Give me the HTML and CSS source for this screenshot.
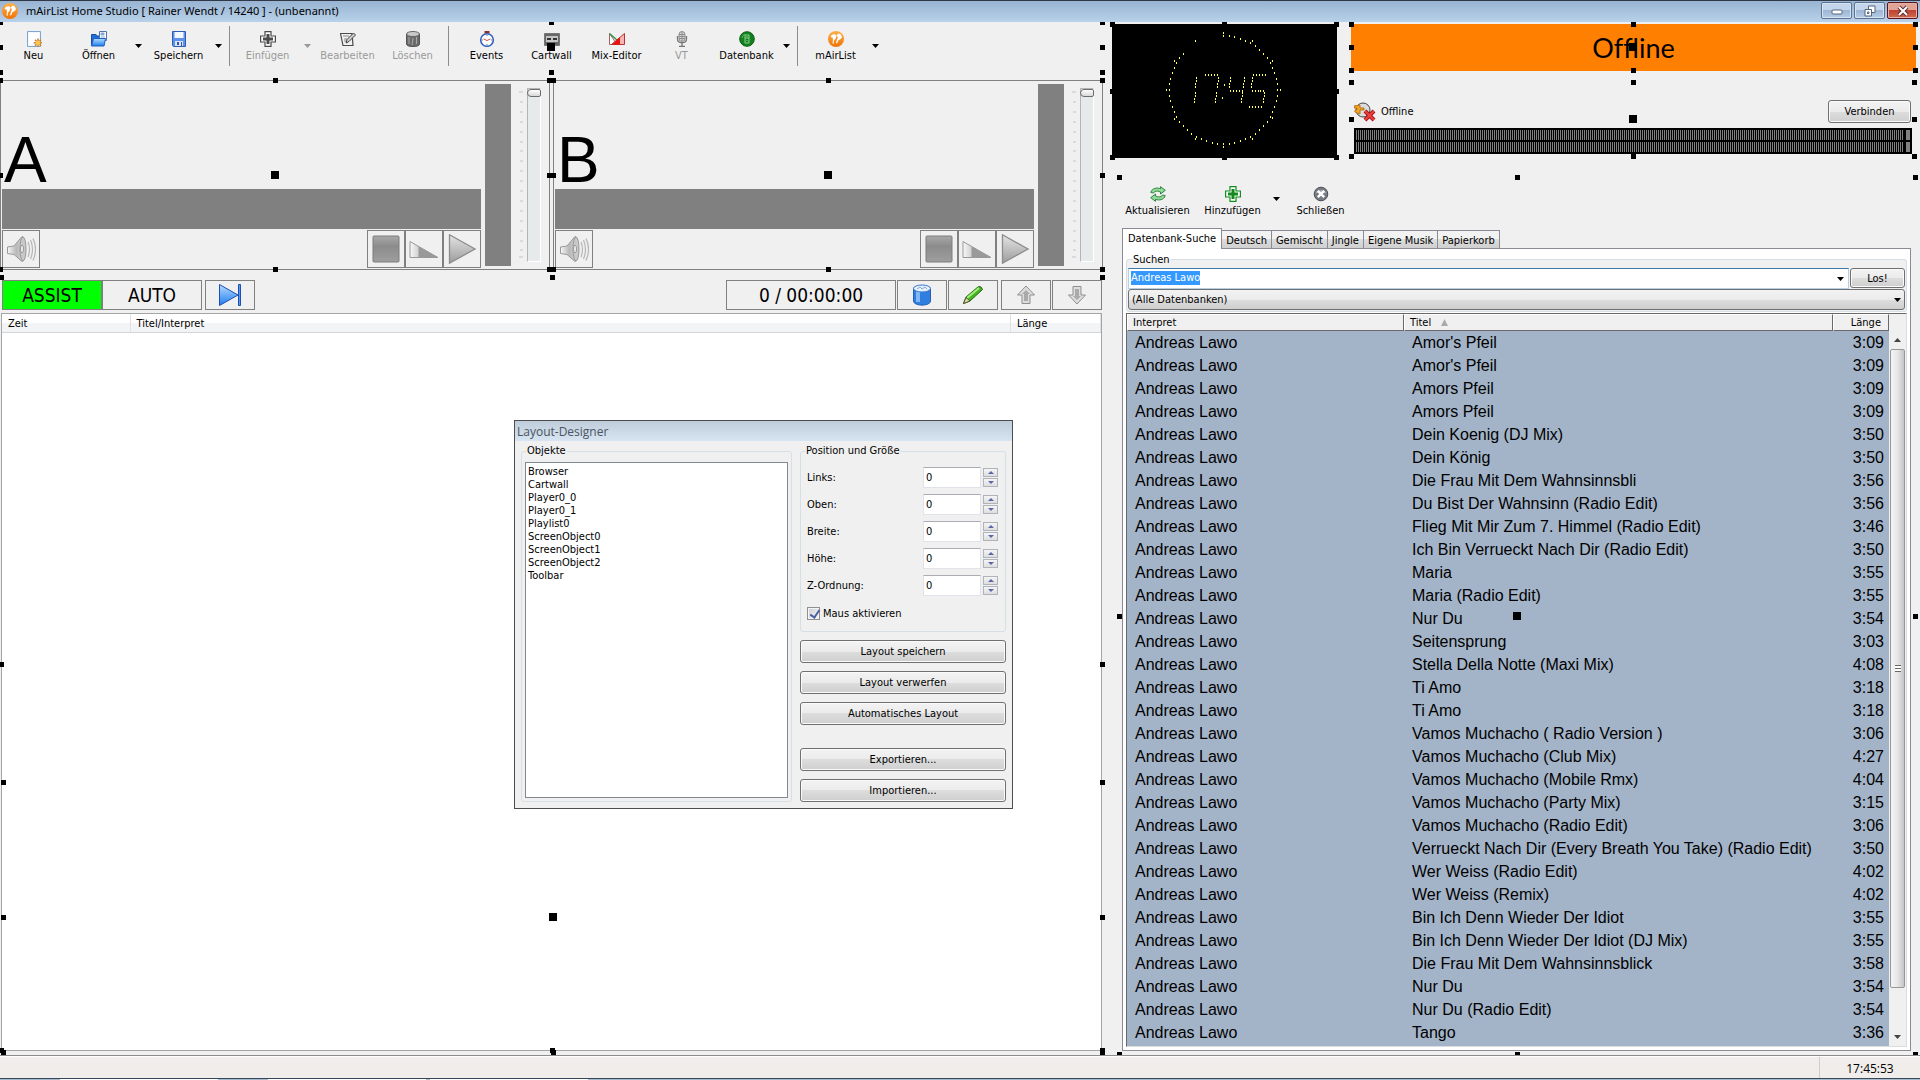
FILE: index.html
```
<!DOCTYPE html>
<html lang="de">
<head>
  <meta charset="UTF-8">
  <meta name="viewport" content="width=device-width, initial-scale=1.0">
  <title>mAirList Home Studio</title>
  <link rel="stylesheet" href="styles.css">
</head>
<body>
  <!-- shared icons -->
  <svg class="sprite" width="0" height="0" aria-hidden="true">
    <defs>
      <linearGradient id="g-orange" x1="0" y1="0" x2="0" y2="1"><stop offset="0" stop-color="#ffb04a"/><stop offset="1" stop-color="#ee7408"/></linearGradient>
      <linearGradient id="g-blue" x1="0" y1="0" x2="0" y2="1"><stop offset="0" stop-color="#b5dcff"/><stop offset="1" stop-color="#1f7df0"/></linearGradient>
      <linearGradient id="g-grey" x1="0" y1="0" x2="0" y2="1"><stop offset="0" stop-color="#e4e4e4"/><stop offset="1" stop-color="#9c9c9c"/></linearGradient>
      <linearGradient id="g-stop" x1="0" y1="0" x2="0" y2="1"><stop offset="0" stop-color="#a8a8a8"/><stop offset="0.4" stop-color="#8c8c8c"/><stop offset="1" stop-color="#9e9e9e"/></linearGradient>
      <linearGradient id="g-side" x1="0" y1="0" x2="1" y2="0"><stop offset="0" stop-color="#f8f8f8"/><stop offset="0.5" stop-color="#b8b8b8"/><stop offset="1" stop-color="#dcdcdc"/></linearGradient>
    </defs>
    <symbol id="i-logo" viewBox="0 0 16 16">
      <circle cx="8" cy="8" r="8" fill="url(#g-orange)"/>
      <path d="M2.500 6C3.500 3.500 5.500 3 7.500 3.500L8.500 5L7.500 8L6 9.500L5.500 13L4.500 12.500L5 8.500L4.500 6.500ZM8.500 4.500L10.500 2.500L13 3.500L14 6.500L12 8.500L10.500 9L9 12.500L8 12L9 8.500L10 6.500Z" fill="#fff"/>
    </symbol>
    <symbol id="i-new" viewBox="0 0 16 16">
      <path d="M1.500.500H14.500V15.500H1.500Z" fill="#eff7ff" stroke="#7fa6cc"/>
      <path d="M3 2H13V9L3 14Z" fill="#fff"/>
      <path d="M12 7.500V16M7.800 11.800H16M9 8.800L15 14.800M15 8.800L9 14.800" stroke="#c78134" stroke-width="1.600"/>
      <circle cx="12" cy="11.800" r="2.400" fill="#ffc64a"/>
    </symbol>
    <symbol id="i-open" viewBox="0 0 16 16">
      <path d="M.500 3.500H5L6 5H12V14.500H.500Z" fill="#1f6fd6" stroke="#174fa5"/>
      <path d="M8.500.500H15.500V9.500H8.500Z" fill="#fff" stroke="#5076ad"/>
      <path d="M10 2H13V4H10ZM10 6H14" fill="#83a9df" stroke="#83a9df"/>
      <path d="M2.500 7.500H14.500L13 15H.500Z" fill="url(#g-blue)" stroke="#1c5fc0"/>
    </symbol>
    <symbol id="i-save" viewBox="0 0 16 16">
      <path d="M1.500.500H14.500V15.500H2.500L1.500 14.500Z" fill="#5e92ea" stroke="#2d5eb4"/>
      <path d="M3.500 1H12.500V7H3.500Z" fill="#f4f8ff"/>
      <path d="M4 10H12V15H4Z" fill="#d9e4f6"/><path d="M6 11H8V14H6ZM10 11H11V15H10Z" fill="#3458a0"/>
    </symbol>
    <symbol id="i-plus" viewBox="0 0 16 16">
      <path d="M5 .600H11V5H15.400V11H11V15.400H5V11H.600V5H5Z" fill="#fff" stroke="currentColor" stroke-width="1.200"/>
      <path d="M6.500 3H9.500V6.500H13V9.500H9.500V13H6.500V9.500H3V6.500H6.500Z" fill="currentColor"/>
    </symbol>
    <symbol id="i-edit" viewBox="0 0 16 16">
      <path d="M.500 2.500H12L13 14.500H3Z" fill="#f1f1f1" stroke="#4b4b4b" stroke-width="1.200"/>
      <path d="M3 5H9M4 8H7M4 10H6" stroke="#888"/>
      <path d="M6 12L7 8.500L13.500 2L15.500 4L9 10.500Z" fill="#ccc" stroke="#444"/>
    </symbol>
    <symbol id="i-trash" viewBox="0 0 16 16">
      <path d="M1.500 3V13C1.500 16.500 14.500 16.500 14.500 13V3Z" fill="#6b6b6b" stroke="#555"/>
      <ellipse cx="8" cy="3" rx="6.500" ry="2.500" fill="#c9c9c9" stroke="#666"/>
      <path d="M4 6V13M8 7L7 14M11.500 6V13" stroke="#a9a9a9"/>
    </symbol>
    <symbol id="i-timer" viewBox="0 0 16 16">
      <path d="M5.500 0H10.500V2.500H5.500Z" fill="#8d2f2f"/>
      <circle cx="8" cy="9" r="6.300" fill="#fff" stroke="#3262bd" stroke-width="1.600"/>
      <path d="M4.500 8L8 9.500L11.500 8" fill="none" stroke="#c25555"/>
      <path d="M8 4V5M8 13V14M3 9H4M12 9H13" stroke="#777"/>
    </symbol>
    <symbol id="i-cart" viewBox="0 0 16 16">
      <path d="M.500 2.500H15.500V14.500H.500Z" fill="#666" stroke="#777"/>
      <path d="M2 5H14V11H2Z" fill="#c5c5c5"/>
      <path d="M3 7H7V9H3ZM9 7H13V9H9Z" fill="#333"/>
    </symbol>
    <symbol id="i-mix" viewBox="0 0 16 16">
      <path d="M.500 2.500V13.500H8Z" fill="#fff" stroke="#9b6363"/>
      <path d="M.500 2.500L8 9" stroke="#2f9448" stroke-width="1.400"/>
      <path d="M15.500 2.500V13.500H2.500Z" fill="#f7b5b5" stroke="#b33"/>
      <path d="M11 6V13.500H3Z" fill="#ea1111"/>
    </symbol>
    <symbol id="i-mic" viewBox="0 0 16 16">
      <path d="M3.500 5V8C3.500 13 12.500 13 12.500 8V5M8 12V15M5 15.300H11" fill="none" stroke="#777" stroke-width="1.300"/>
      <rect x="5" y=".500" width="6" height="10" rx="3" fill="#d9d9d9" stroke="#8c8c8c"/>
      <path d="M5 3.500H11M5 5.500H11M5 7.500H11M8 1V10" stroke="#8c8c8c"/>
    </symbol>
    <symbol id="i-db" viewBox="0 0 16 16">
      <circle cx="8" cy="8" r="7.300" fill="#11801d" stroke="#0a5d14"/>
      <path d="M6 4H10V12H6ZM6 7H10M7.500 5.500H8.500M7.500 9.500H8.500" fill="none" stroke="#8bd091"/>
      <path d="M3 7A5 5 0 0 1 6 3" fill="none" stroke="#5cb565"/>
    </symbol>
    <symbol id="i-refresh" viewBox="0 0 16 16">
      <path d="M.800 6.500C2 2 7 1.300 10.500 2.700V.700L15.300 4.300L10.500 8V6C7.500 4.500 4.500 4.800 3.500 7Z" fill="#8fdc97" stroke="#348245"/>
      <path d="M15.200 9.500C14 14 9 14.700 5.500 13.300V15.300L.700 11.700L5.500 8V10C8.500 11.500 11.500 11.200 12.500 9Z" fill="#8fdc97" stroke="#348245"/>
    </symbol>
    <symbol id="i-close" viewBox="0 0 16 16">
      <circle cx="8" cy="8" r="6.800" fill="#777b83" stroke="#4c4e52"/>
      <path d="M2.500 7A6 5 0 0 1 13.500 7Z" fill="#a9adb5"/>
      <path d="M4.800 4.800L11.200 11.200M11.200 4.800L4.800 11.200" stroke="#fff" stroke-width="2.400"/>
    </symbol>
    <symbol id="i-arrow" viewBox="0 0 7 4"><path d="M0 0H7L3.500 4Z" fill="currentColor"/></symbol>
    <symbol id="i-speaker" viewBox="0 0 30 30">
      <path d="M1.500 13L8 12L16 2.500C20 1 20 28 16 27.500L8 20.500L1.500 19.500Z" fill="url(#g-side)" stroke="#999"/>
      <ellipse cx="17" cy="15" rx="3" ry="12" fill="#c9c9c9" stroke="#999"/>
      <ellipse cx="16" cy="15" rx="1.500" ry="4" fill="#eee" stroke="#999"/>
      <path d="M22 8Q25 15 22 23M24.500 6Q28.500 15 24.500 25M27 4.500Q32 15 27 26.500" fill="none" stroke="#b5b5b5" stroke-width="1.200"/>
    </symbol>
    <symbol id="i-stop" viewBox="0 0 30 30"><rect x="2" y="2" width="26" height="26" rx="1" fill="url(#g-stop)" stroke="#7c7c7c"/></symbol>
    <symbol id="i-fade" viewBox="0 0 30 30">
      <path d="M1 7.500V23.500H29Z" fill="url(#g-side)" stroke="#999"/>
      <path d="M9.500 12.500L28 23H9.500Z" fill="#999"/>
    </symbol>
    <symbol id="i-play" viewBox="0 0 30 30"><path d="M2.500.800L28 15L2.500 29.200Z" fill="url(#g-grey)" stroke="#8c8c8c" stroke-width="1.300"/></symbol>
  </svg>

  <header class="titlebar">
    <svg class="icon"><use href="#i-logo"/></svg>
    <h1>mAirList Home Studio [ Rainer Wendt / 14240 ] - (unbenannt)</h1>
    <div class="window-buttons">
      <button aria-label="Minimieren"><svg width="12" height="12"><rect x="1" y="5" width="10" height="4" rx="1" fill="#fff" stroke="#53647c"/></svg></button>
      <button aria-label="Wiederherstellen"><svg width="12" height="12"><path d="M4.500 1H11V7.500H4.500Z" fill="#fff" stroke="#53647c"/><path d="M1 4.500H7.500V11H1Z" fill="#fff" stroke="#53647c"/><path d="M3.500 7H5V8.500H3.500Z" fill="none" stroke="#53647c"/></svg></button>
      <button class="close" aria-label="Schließen"><svg width="12" height="12"><path d="M2 2L10 10M10 2L2 10" stroke="#5a2e35" stroke-width="4"/><path d="M2 2L10 10M10 2L2 10" stroke="#fff" stroke-width="2"/></svg></button>
    </div>
  </header>

  <main class="workspace">
    <div class="left">
      <nav class="toolbar object">
        <button class="tool"><svg class="icon"><use href="#i-new"/></svg>Neu</button>
        <button class="tool"><svg class="icon"><use href="#i-open"/></svg>Öffnen</button>
        <button class="drop" aria-label="Öffnen Menü"><svg><use href="#i-arrow"/></svg></button>
        <button class="tool"><svg class="icon"><use href="#i-save"/></svg>Speichern</button>
        <button class="drop" aria-label="Speichern Menü"><svg><use href="#i-arrow"/></svg></button>
        <span class="sep"></span>
        <button class="tool" disabled><svg class="icon dark"><use href="#i-plus"/></svg>Einfügen</button>
        <button class="drop" disabled aria-label="Einfügen Menü"><svg><use href="#i-arrow"/></svg></button>
        <button class="tool" disabled><svg class="icon"><use href="#i-edit"/></svg>Bearbeiten</button>
        <button class="tool" disabled><svg class="icon"><use href="#i-trash"/></svg>Löschen</button>
        <span class="sep"></span>
        <button class="tool"><svg class="icon"><use href="#i-timer"/></svg>Events</button>
        <button class="tool"><svg class="icon"><use href="#i-cart"/></svg>Cartwall</button>
        <button class="tool"><svg class="icon"><use href="#i-mix"/></svg>Mix-Editor</button>
        <button class="tool" disabled><svg class="icon"><use href="#i-mic"/></svg>VT</button>
        <button class="tool"><svg class="icon"><use href="#i-db"/></svg>Datenbank</button>
        <button class="drop" aria-label="Datenbank Menü"><svg><use href="#i-arrow"/></svg></button>
        <span class="sep"></span>
        <button class="tool"><svg class="icon"><use href="#i-logo"/></svg>mAirList</button>
        <button class="drop" aria-label="mAirList Menü"><svg><use href="#i-arrow"/></svg></button>
      </nav>

      <div class="players">
        <section class="player object">
          <div class="deck">
            <div class="letter">A</div>
            <div class="progress"></div>
            <div class="controls">
              <button aria-label="Vorhören"><svg><use href="#i-speaker"/></svg></button>
              <span class="space"></span>
              <button aria-label="Stop"><svg><use href="#i-stop"/></svg></button>
              <button aria-label="Fade"><svg><use href="#i-fade"/></svg></button>
              <button aria-label="Start"><svg><use href="#i-play"/></svg></button>
            </div>
          </div>
          <div class="level"></div>
          <svg class="ticks" width="4" height="168"><path d="M0 1H4M1 11H4M1 21H4M1 31H4M1 41H4M1 51H4M1 60H4M1 70H4M1 80H4M1 90H4M1 100H4M1 110H4M1 120H4M1 130H4M1 140H4M1 150H4M1 159H4M0 166H4" stroke="#c4c4c4"/></svg>
          <input class="fader" type="range" min="0" max="100" value="100" aria-label="Lautstärke A">
        </section>
        <section class="player object">
          <div class="deck">
            <div class="letter">B</div>
            <div class="progress"></div>
            <div class="controls">
              <button aria-label="Vorhören"><svg><use href="#i-speaker"/></svg></button>
              <span class="space"></span>
              <button aria-label="Stop"><svg><use href="#i-stop"/></svg></button>
              <button aria-label="Fade"><svg><use href="#i-fade"/></svg></button>
              <button aria-label="Start"><svg><use href="#i-play"/></svg></button>
            </div>
          </div>
          <div class="level"></div>
          <svg class="ticks" width="4" height="168"><path d="M0 1H4M1 11H4M1 21H4M1 31H4M1 41H4M1 51H4M1 60H4M1 70H4M1 80H4M1 90H4M1 100H4M1 110H4M1 120H4M1 130H4M1 140H4M1 150H4M1 159H4M0 166H4" stroke="#c4c4c4"/></svg>
          <input class="fader" type="range" min="0" max="100" value="100" aria-label="Lautstärke B">
        </section>
      </div>

      <section class="playlist object">
        <div class="playlist-bar">
          <div class="modes">
            <button class="mode active">ASSIST</button>
            <button class="mode">AUTO</button>
          </div>
          <button class="square" aria-label="Nächster Titel"><svg width="24" height="24"><path d="M1.500 1.500L20 12L1.500 22.500Z" fill="url(#g-blue)" stroke="#1c4fae"/><path d="M20.500 1.500H22.500V22.500H20.500Z" fill="#4d9df4" stroke="#1c4fae"/></svg></button>
          <output class="counter">0 / 00:00:00</output>
          <div class="edit-group">
            <button class="square" aria-label="Leeren"><svg width="20" height="22"><path d="M1.500 4V17C1.500 22.500 18.500 22.500 18.500 17V4Z" fill="#2f7ee0" stroke="#2360b4"/><path d="M4 7V18H8V7Z" fill="#7fb8f5"/><ellipse cx="10" cy="4.500" rx="8.500" ry="3.500" fill="#e4f1ff" stroke="#3f79c6"/><path d="M5 5L8 3L10 5L13 3L15 5" fill="none" stroke="#8aa9cd"/></svg></button>
            <button class="square" aria-label="Bearbeiten"><svg width="22" height="20"><path d="M1.500 18.500L4 12L16.500 1.500Q19.500 1 20.500 4.500L8 16Z" fill="#43b51f" stroke="#246b12"/><path d="M5 13L17 3" stroke="#a8ec7f" stroke-width="2"/><path d="M1.500 18.500L4 12.500L8 16Z" fill="#ead9ae" stroke="#4c5a2a"/></svg></button>
          </div>
          <div class="edit-group">
            <button class="square" aria-label="Nach oben"><svg width="20" height="20"><path d="M10 1L18.500 10H14V18.500H6V10H1.500Z" fill="#ddd" stroke="#8f8f8f"/><path d="M10 5L14 9H12V16H8V9H6Z" fill="#aaa"/></svg></button>
            <button class="square" aria-label="Nach unten"><svg width="20" height="20"><path d="M10 19L18.500 10H14V1.500H6V10H1.500Z" fill="#ddd" stroke="#8f8f8f"/><path d="M10 15L14 11H12V4H8V11H6Z" fill="#aaa"/></svg></button>
          </div>
        </div>
        <div class="playlist-view">
          <table>
            <thead>
              <tr><th class="time">Zeit</th><th>Titel/Interpret</th><th class="length">Länge</th></tr>
            </thead>
          </table>
        </div>
        <div class="cartwall object"></div>
      </section>
    </div>

    <div class="right">
      <div class="top">
        <div class="clock object"><svg id="clock" width="225" height="134" role="img" aria-label="17:45"></svg></div>
        <div class="status-column">
          <div class="on-air object">Offline</div>
          <div class="encoder object">
            <div class="encoder-row">
              <svg width="22" height="20"><circle cx="9" cy="8" r="7" fill="#dcdcdc" stroke="#444"/><path d="M0 4L6 3V6H10V8H6V12L1 10V8H3V6H0Z" fill="#f5a623" stroke="#b5751c"/><path d="M11 9L20 18M20 9L11 18" stroke="#a31515" stroke-width="4"/><path d="M11 9L20 18M20 9L11 18" stroke="#f04040" stroke-width="2"/></svg>
              <span>Offline</span>
              <button class="btn connect">Verbinden</button>
            </div>
            <div class="meter">
              <div class="channel"><span class="bars"></span><span class="peak"></span></div>
              <div class="channel"><span class="bars"></span><span class="peak"></span></div>
            </div>
          </div>
        </div>
      </div>

      <section class="browser object">
        <nav class="browser-bar">
          <button class="tool"><svg class="icon"><use href="#i-refresh"/></svg>Aktualisieren</button>
          <button class="tool"><svg class="icon green"><use href="#i-plus"/></svg>Hinzufügen</button>
          <button class="drop" aria-label="Hinzufügen Menü"><svg><use href="#i-arrow"/></svg></button>
          <button class="tool"><svg class="icon"><use href="#i-close"/></svg>Schließen</button>
        </nav>
        <div class="tabs" role="tablist">
          <button class="tab active" role="tab" aria-selected="true">Datenbank-Suche</button>
          <button class="tab" role="tab">Deutsch</button>
          <button class="tab" role="tab">Gemischt</button>
          <button class="tab" role="tab">Jingle</button>
          <button class="tab" role="tab">Eigene Musik</button>
          <button class="tab" role="tab">Papierkorb</button>
        </div>
        <div class="tab-page">
          <fieldset class="search">
            <legend><label for="query">Suchen</label></legend>
            <div class="search-row">
              <div class="combo">
                <input id="query" type="text" value="Andreas Lawo">
                <button class="drop" aria-label="Verlauf"><svg><use href="#i-arrow"/></svg></button>
              </div>
              <button class="btn go">Los!</button>
            </div>
            <div class="source">
              <select aria-label="Datenbank"><option>(Alle Datenbanken)</option></select>
              <svg class="source-arrow"><use href="#i-arrow"/></svg>
            </div>
          </fieldset>
          <div class="results">
            <div class="results-view">
              <table>
                <thead>
                  <tr><th class="artist">Interpret</th><th>Titel <svg class="sort" width="7" height="7"><path d="M3.500 0L7 7H0Z" fill="#aaa"/></svg></th><th class="length">Länge</th></tr>
                </thead>
                <tbody>
                  <tr><td>Andreas Lawo</td><td>Amor's Pfeil</td><td>3:09</td></tr>
                  <tr><td>Andreas Lawo</td><td>Amor's Pfeil</td><td>3:09</td></tr>
                  <tr><td>Andreas Lawo</td><td>Amors Pfeil</td><td>3:09</td></tr>
                  <tr><td>Andreas Lawo</td><td>Amors Pfeil</td><td>3:09</td></tr>
                  <tr><td>Andreas Lawo</td><td>Dein Koenig (DJ Mix)</td><td>3:50</td></tr>
                  <tr><td>Andreas Lawo</td><td>Dein König</td><td>3:50</td></tr>
                  <tr><td>Andreas Lawo</td><td>Die Frau Mit Dem Wahnsinnsbli</td><td>3:56</td></tr>
                  <tr><td>Andreas Lawo</td><td>Du Bist Der Wahnsinn (Radio Edit)</td><td>3:56</td></tr>
                  <tr><td>Andreas Lawo</td><td>Flieg Mit Mir Zum 7. Himmel (Radio Edit)</td><td>3:46</td></tr>
                  <tr><td>Andreas Lawo</td><td>Ich Bin Verrueckt Nach Dir (Radio Edit)</td><td>3:50</td></tr>
                  <tr><td>Andreas Lawo</td><td>Maria</td><td>3:55</td></tr>
                  <tr><td>Andreas Lawo</td><td>Maria (Radio Edit)</td><td>3:55</td></tr>
                  <tr><td>Andreas Lawo</td><td>Nur Du</td><td>3:54</td></tr>
                  <tr><td>Andreas Lawo</td><td>Seitensprung</td><td>3:03</td></tr>
                  <tr><td>Andreas Lawo</td><td>Stella Della Notte (Maxi Mix)</td><td>4:08</td></tr>
                  <tr><td>Andreas Lawo</td><td>Ti Amo</td><td>3:18</td></tr>
                  <tr><td>Andreas Lawo</td><td>Ti Amo</td><td>3:18</td></tr>
                  <tr><td>Andreas Lawo</td><td>Vamos Muchacho ( Radio Version )</td><td>3:06</td></tr>
                  <tr><td>Andreas Lawo</td><td>Vamos Muchacho (Club Mix)</td><td>4:27</td></tr>
                  <tr><td>Andreas Lawo</td><td>Vamos Muchacho (Mobile Rmx)</td><td>4:04</td></tr>
                  <tr><td>Andreas Lawo</td><td>Vamos Muchacho (Party Mix)</td><td>3:15</td></tr>
                  <tr><td>Andreas Lawo</td><td>Vamos Muchacho (Radio Edit)</td><td>3:06</td></tr>
                  <tr><td>Andreas Lawo</td><td>Verrueckt Nach Dir (Every Breath You Take) (Radio Edit)</td><td>3:50</td></tr>
                  <tr><td>Andreas Lawo</td><td>Wer Weiss (Radio Edit)</td><td>4:02</td></tr>
                  <tr><td>Andreas Lawo</td><td>Wer Weiss (Remix)</td><td>4:02</td></tr>
                  <tr><td>Andreas Lawo</td><td>Bin Ich Denn Wieder Der Idiot</td><td>3:55</td></tr>
                  <tr><td>Andreas Lawo</td><td>Bin Ich Denn Wieder Der Idiot (DJ Mix)</td><td>3:55</td></tr>
                  <tr><td>Andreas Lawo</td><td>Die Frau Mit Dem Wahnsinnsblick</td><td>3:58</td></tr>
                  <tr><td>Andreas Lawo</td><td>Nur Du</td><td>3:54</td></tr>
                  <tr><td>Andreas Lawo</td><td>Nur Du (Radio Edit)</td><td>3:54</td></tr>
                  <tr><td>Andreas Lawo</td><td>Tango</td><td>3:36</td></tr>
                </tbody>
              </table>
            </div>
            <div class="scrollbar">
              <svg class="scroll-up" width="7" height="4"><path d="M0 4H7L3.500 0Z" fill="#444"/></svg>
              <div class="track"><div class="thumb"></div></div>
              <svg class="scroll-down" width="7" height="4"><path d="M0 0H7L3.500 4Z" fill="#444"/></svg>
            </div>
          </div>
        </div>
      </section>
    </div>

    <div class="designer" role="dialog" aria-label="Layout-Designer">
      <h2>Layout-Designer</h2>
      <div class="designer-body">
        <fieldset class="objects">
          <legend>Objekte</legend>
          <select size="9" aria-label="Objekte">
            <option>Browser</option>
            <option>Cartwall</option>
            <option>Player0_0</option>
            <option>Player0_1</option>
            <option>Playlist0</option>
            <option>ScreenObject0</option>
            <option>ScreenObject1</option>
            <option>ScreenObject2</option>
            <option>Toolbar</option>
          </select>
        </fieldset>
        <div class="designer-side">
          <fieldset class="position">
            <legend>Position und Größe</legend>
            <div class="field"><label for="pos-left">Links:</label><input id="pos-left" type="number" value="0"><span class="spin"><button aria-label="mehr"></button><button aria-label="weniger"></button></span></div>
            <div class="field"><label for="pos-top">Oben:</label><input id="pos-top" type="number" value="0"><span class="spin"><button aria-label="mehr"></button><button aria-label="weniger"></button></span></div>
            <div class="field"><label for="pos-width">Breite:</label><input id="pos-width" type="number" value="0"><span class="spin"><button aria-label="mehr"></button><button aria-label="weniger"></button></span></div>
            <div class="field"><label for="pos-height">Höhe:</label><input id="pos-height" type="number" value="0"><span class="spin"><button aria-label="mehr"></button><button aria-label="weniger"></button></span></div>
            <div class="field"><label for="pos-z">Z-Ordnung:</label><input id="pos-z" type="number" value="0"><span class="spin"><button aria-label="mehr"></button><button aria-label="weniger"></button></span></div>
            <label class="check"><input type="checkbox" checked>Maus aktivieren</label>
          </fieldset>
          <button class="btn">Layout speichern</button>
          <button class="btn">Layout verwerfen</button>
          <button class="btn">Automatisches Layout</button>
          <button class="btn export">Exportieren...</button>
          <button class="btn">Importieren...</button>
        </div>
      </div>
    </div>
  </main>

  <footer class="statusbar"><time>17:45:53</time></footer>
  <div class="taskbar"></div>

  <script src="script.js"></script>
</body>
</html>
```
FILE: styles.css
```
* {
  box-sizing: border-box;
}
body {
  margin: 0;
  height: 100vh;
  display: flex;
  flex-direction: column;
  overflow: hidden;
  background: #f0f0f0;
  color: #000;
  font-family: Tahoma, "DejaVu Sans Condensed", "Open Sans", sans-serif;
  font-size: 11px;
  line-height: 14px;
}
button, input, select {
  font: inherit;
  color: inherit;
  margin: 0;
}
button {
  padding: 0;
  border: none;
  background: none;
}
svg {
  display: block;
  flex: none;
}
fieldset {
  margin: 0;
  padding: 0;
  min-width: 0;
  border: 1px solid #d5dfe5;
  border-radius: 3px;
}
legend {
  margin-left: 1px;
  padding: 0 1px;
}
.sprite {
  position: absolute;
}
.icon {
  width: 16px;
  height: 16px;
}
.icon.dark {
  color: #4a4a4a;
}
.icon.green {
  color: #138a1d;
}

/* title bar */
.titlebar {
  flex: none;
  height: 22px;
  display: flex;
  align-items: center;
  gap: 8px;
  padding: 0 2px 2px;
  border-top: 1px solid #2f3846;
  background: linear-gradient(#98b4d2, #b9d1ea);
}
.titlebar h1 {
  flex: 1;
  margin: 0;
  font: 11px "Segoe UI", "Noto Sans", sans-serif;
}
.window-buttons {
  display: flex;
  gap: 2px;
}
.window-buttons button {
  width: 31px;
  height: 17px;
  display: flex;
  align-items: center;
  justify-content: center;
  border: 1px solid #5b7290;
  border-radius: 2px;
  background: linear-gradient(#c3d5ea 50%, #9db6d3 50%, #b6cde6);
  box-shadow: inset 0 0 0 1px #d5e3f2;
}
.window-buttons .close {
  border-color: #5a1420;
  background: linear-gradient(#e3a394 50%, #bd4332 50%, #d06a50);
  box-shadow: inset 0 0 0 1px #e5b0a5;
}

.workspace {
  flex: 1;
  min-height: 0;
  position: relative;
  display: grid;
  grid-template-columns: 23fr 17fr;
  overflow: hidden;
  border-bottom: 1px solid #8c8c8c;
}
.left {
  display: flex;
  flex-direction: column;
  min-width: 0;
  padding-right: 1px;
}

/* selection handles of the layout designer */
.object {
  position: relative;
}
.handle {
  position: absolute;
  z-index: 2;
  width: 5px;
  height: 5px;
  margin: -2px;
  background: #000;
  pointer-events: none;
}
.handle.center {
  width: 8px;
  height: 8px;
  margin: -4px;
}

/* toolbars */
.toolbar {
  height: 51px;
  margin-bottom: 7px;
  padding: 4px 0 7px 1px;
  display: flex;
}
.tool {
  width: 65px;
  display: flex;
  flex-direction: column;
  align-items: center;
  gap: 2px;
  padding-top: 5px;
}
.tool:disabled, .drop:disabled {
  color: #999;
}
.drop {
  width: 15px;
  display: flex;
  align-items: center;
  justify-content: center;
}
.drop svg, .source-arrow {
  width: 7px;
  height: 4px;
}
.sep {
  width: 9px;
  padding-left: 3px;
}
.sep::before {
  content: "";
  display: block;
  width: 1px;
  height: 40px;
  background: #8c8c8c;
}

/* players */
.players {
  display: flex;
  gap: 3px;
}
.player {
  flex: 1;
  height: 190px;
  display: flex;
  border: 1px solid #808080;
  padding: 3px 8px 1px 1px;
}
.deck {
  flex: 1;
  display: flex;
  flex-direction: column;
  justify-content: flex-end;
}
.letter {
  padding-left: 2px;
  font: 64px/58px Arial, "Liberation Sans", sans-serif;
}
.progress {
  height: 40px;
  background: #808080;
}
.controls {
  display: flex;
  padding-top: 1px;
}
.controls .space {
  flex: 1;
}
.controls button {
  width: 38px;
  height: 38px;
  display: flex;
  align-items: center;
  justify-content: center;
  border: 1px solid #808080;
}
.controls svg {
  width: 30px;
  height: 30px;
}
.level {
  width: 26px;
  margin: 0 8px 2px 4px;
  background: #808080;
}
.ticks {
  margin: 7px 4px 0 0;
}
.fader {
  appearance: none;
  writing-mode: vertical-lr;
  direction: rtl;
  width: 14px;
  height: 174px;
  margin-top: 4px;
  border: 1px solid #fff;
  border-left-color: #b1b5ba;
  border-top-color: #b1b5ba;
  background: #e7eaea;
}
.fader::-webkit-slider-thumb {
  appearance: none;
  width: 14px;
  height: 8px;
  border: 1px solid #6c6c6c;
  border-radius: 4px 2px 2px 4px;
  background: linear-gradient(#fff, #d8d8d8);
}

/* playlist */
.playlist {
  flex: 1;
  min-height: 0;
  display: flex;
  flex-direction: column;
  gap: 3px;
  margin: 7px 0 4px 1px;
  padding-top: 3px;
}
.playlist-bar {
  display: flex;
  gap: 3px;
  padding: 0 1px;
}
.modes {
  display: flex;
}
.mode {
  width: 100px;
  height: 30px;
  border: 1px solid #808080;
  font-size: 19px;
}
.mode.active {
  background: #00ff00;
}
.square {
  width: 50px;
  height: 30px;
  display: flex;
  align-items: center;
  justify-content: center;
  border: 1px solid #808080;
}
.counter {
  width: 170px;
  height: 30px;
  margin: 0 -2px 0 auto;
  border: 1px solid #808080;
  font-size: 19px;
  line-height: 28px;
  text-align: center;
}
.edit-group {
  display: flex;
  gap: 1px;
}
.playlist-view {
  flex: 1;
  margin-right: 1px;
  border: 1px solid #a5a5a5;
  background: #fff;
}
.playlist-view table {
  width: 100%;
  table-layout: fixed;
  border-collapse: collapse;
}
.playlist-view th {
  height: 18px;
  padding: 3px 6px 0;
  border-right: 1px solid #dfe1e4;
  border-bottom: 1px solid #d5d5d5;
  background: linear-gradient(#fff 50%, #f3f4f6 50%);
  font-weight: normal;
  text-align: left;
}
.playlist-view .time {
  width: 128px;
}
.playlist-view .length {
  width: 90px;
}
.cartwall {
  position: absolute;
  left: 2px;
  right: 0;
  bottom: -2px;
  height: 35%;
}

/* clock and encoder */
.right {
  display: flex;
  flex-direction: column;
  min-width: 0;
  min-height: 0;
  padding: 2px 4px 0 8px;
}
.top {
  display: flex;
  gap: 14px;
}
.clock {
  background: #000;
}
.status-column {
  flex: 1;
  display: flex;
  flex-direction: column;
  gap: 11px;
}
.on-air {
  height: 47px;
  background: #ff8000;
  font: 27px/48px "Comic Sans MS", Lato, sans-serif;
  font-variant-ligatures: none;
  text-align: center;
}
.encoder {
  height: 75px;
  margin-right: 1px;
  padding: 18px 3px 3px;
}
.encoder-row {
  display: flex;
  align-items: center;
  gap: 5px;
  height: 23px;
}
.btn {
  height: 23px;
  padding-top: 1px;
  border: 1px solid #707070;
  border-radius: 3px;
  background: linear-gradient(#f3f3f3, #ebebeb 50%, #dddddd 50%, #cfcfcf);
  box-shadow: inset 0 0 0 1px #fafafa;
}
.connect {
  width: 83px;
  margin: 0 1px 0 auto;
}
.meter {
  display: flex;
  flex-direction: column;
  gap: 2px;
  margin-top: 5px;
  padding: 2px;
  background: #000;
}
.channel {
  display: flex;
  gap: 3px;
  height: 10px;
}
.bars {
  flex: 1;
  background: repeating-linear-gradient(90deg, #808080 0 1px, #000 1px 2px);
}
.peak {
  width: 4px;
  background: #808080;
}

/* database browser */
.browser {
  flex: 1;
  min-height: 0;
  display: flex;
  flex-direction: column;
  margin: 19px 0 0 7px;
  padding: 0 5px 4px 3px;
}
.browser-bar {
  display: flex;
  height: 51px;
  margin-left: -2px;
  padding: 4px 0 13px;
}
.browser-bar .tool {
  width: 75px;
}
.browser-bar .drop {
  width: 13px;
  padding-top: 2px;
}
.tabs {
  display: flex;
  align-items: flex-end;
  height: 20px;
}
.tab {
  height: 18px;
  padding: 2px 4px 0;
  border: 1px solid #898c95;
  border-left-width: 0;
  border-bottom: none;
  background: linear-gradient(#f2f2f2 50%, #dddddd 50%, #cfcfcf);
}
.tab.active {
  height: 21px;
  margin-bottom: -1px;
  padding: 0 5px 1px;
  border-left-width: 1px;
  background: #fff;
  z-index: 1;
}
.tab-page {
  flex: 1;
  min-height: 0;
  display: flex;
  flex-direction: column;
  gap: 1px;
  padding: 3px;
  border: 1px solid #898c95;
  background: #fff;
}
.search {
  padding: 1px;
  background: #f0f0f0;
}
.search legend {
  margin-left: 4px;
  line-height: 15px;
}
.search-row {
  display: flex;
  gap: 1px;
}
.combo {
  flex: 1;
  display: flex;
  height: 21px;
  border: 1px solid #b5cfe7;
  border-top-color: #3d7bad;
  background: #fff;
}
.combo input {
  flex: 1;
  min-width: 0;
  padding: 0 2px 2px;
  border: none;
  outline: none;
  background: none;
}
.combo input::selection {
  background: #3399ff;
  color: #fff;
}
.go {
  width: 55px;
  height: 20px;
}
.source {
  position: relative;
}
.source select {
  appearance: none;
  display: block;
  width: 100%;
  height: 21px;
  padding: 0 3px;
  border: 1px solid #707070;
  border-radius: 3px;
  background: linear-gradient(#f2f2f2, #ebebeb 50%, #dddddd 50%, #cfcfcf);
}
.source-arrow {
  position: absolute;
  right: 4px;
  top: 9px;
  pointer-events: none;
}
.results {
  flex: 1;
  min-height: 0;
  display: flex;
  border: 1px solid #dcdcdc;
  border-top-color: #696969;
  border-left-color: #696969;
  background: #f0f0f0;
}
.results-view {
  flex: 1;
  overflow: hidden;
  background: #a4b4c8;
}
.results table {
  width: 100%;
  table-layout: fixed;
  border-collapse: separate;
  border-spacing: 0;
}
.results th {
  height: 17px;
  padding: 1px 5px 0;
  border: 1px solid #fff;
  border-right-color: #696969;
  border-bottom-color: #696969;
  background: #f0f0f0;
  font-weight: normal;
  text-align: left;
}
.results .artist {
  width: 277px;
}
.results .length {
  width: 56px;
  padding-right: 7px;
  text-align: right;
}
.sort {
  display: inline-block;
  margin-left: 7px;
}
.results td {
  height: 23px;
  padding: 0 8px;
  font: 16px/23px Arial, "Liberation Sans", sans-serif;
  white-space: nowrap;
}
.results td:last-child {
  padding: 0 5px;
  text-align: right;
}
.scrollbar {
  width: 17px;
  display: flex;
  flex-direction: column;
  align-items: center;
  padding: 24px 1px 7px;
}
.track {
  flex: 1;
  width: 100%;
  margin: 7px 0 6px;
}
.thumb {
  height: 94%;
  border: 1px solid #979797;
  border-radius: 2px;
  background:
    linear-gradient(#666 1px, #fff 1px 3px, #666 3px 4px, #fff 4px 6px, #666 6px) center / 6px 7px no-repeat,
    linear-gradient(90deg, #f5f5f5, #e6e6e8 50%, #c6c6ca);
}

/* layout designer window */
.designer {
  position: absolute;
  z-index: 5;
  left: 514px;
  top: 398px;
  width: 499px;
  border: 1px solid #4d4d4d;
  background: #f0f0f0;
}
.designer h2 {
  height: 20px;
  margin: 0;
  padding: 1px 2px 0;
  background: linear-gradient(#bfcddb, #d7e4f2);
  color: #4a5560;
  font: 12px/20px "Segoe UI", "Open Sans", sans-serif;
}
.designer-body {
  display: flex;
  gap: 8px;
  padding: 3px 6px 6px;
}
.objects {
  width: 271px;
  display: flex;
  padding: 4px 3px 3px;
}
.objects select {
  flex: 1;
  padding: 2px 0;
  border: 1px solid #828790;
  border-radius: 0;
  background: #fff;
  outline: none;
  overflow: hidden;
}
.objects option {
  min-height: 13px;
  padding: 0 2px;
  line-height: 13px;
}
.designer-side {
  flex: 1;
  display: flex;
  flex-direction: column;
  gap: 8px;
}
.position {
  padding: 9px 7px 11px 6px;
}
.position legend {
  margin-left: -2px;
}
.field {
  display: flex;
  align-items: center;
  gap: 2px;
  height: 21px;
  margin-bottom: 6px;
}
.field label {
  flex: 1;
}
.field input {
  appearance: textfield;
  width: 58px;
  height: 21px;
  padding: 0 2px;
  border: 1px solid #e2e3ea;
  border-top-color: #abadb3;
  background: #fff;
}
.field input::-webkit-inner-spin-button {
  display: none;
}
.spin {
  display: grid;
  gap: 1px;
}
.spin button {
  width: 15px;
  height: 9px;
  display: flex;
  align-items: center;
  justify-content: center;
  border: 1px solid #b0b3ba;
  background: linear-gradient(#f5f5f5, #dedede);
}
.spin button::before {
  content: "";
  border: 3px solid transparent;
  border-top-width: 0;
  border-bottom-color: #5a69a6;
}
.spin button:last-child::before {
  transform: rotate(180deg);
}
.check {
  display: flex;
  align-items: center;
  gap: 3px;
  height: 13px;
  margin-top: 11px;
}
.check input {
  appearance: none;
  width: 13px;
  height: 13px;
  border: 1px solid #8e8f8f;
  background: linear-gradient(135deg, #cbcfd5, #f6f6f6);
  box-shadow: inset 0 0 0 1px #f4f4f4;
}
.check input:checked::before {
  content: "";
  display: block;
  width: 4px;
  height: 8px;
  margin: 0 0 0 4px;
  border: solid #4b5fa0;
  border-width: 0 2px 2px 0;
  transform: rotate(35deg);
}
.export {
  margin-top: 15px;
}

/* bottom */
.statusbar {
  flex: none;
  height: 22px;
  display: flex;
  justify-content: flex-end;
  border-top: 1px solid #fff;
  background: #f0edeb;
}
.statusbar time {
  width: 101px;
  border-left: 1px solid #d0cecc;
  font: 12px/24px "Segoe UI", "Open Sans", sans-serif;
  text-align: center;
}
.taskbar {
  flex: none;
  height: 2px;
  border-top: 1px solid #34485c;
  background: linear-gradient(90deg, #a9bacb 60px, #fff 60px 218px, #a9bacb 218px 268px, #fff 268px 426px, #a9bacb 426px 430px, #fff 430px 588px, #a9bacb 588px);
}
```
FILE: script.js
```
// selection handles
const spots = [[0, 0], [50, 0], [100, 0], [0, 50], [50, 50], [100, 50], [0, 100], [50, 100], [100, 100]];

document.querySelectorAll('.object').forEach(function(object) {
  spots.forEach(function([x, y]) {
    const handle = document.createElement('span');
    handle.className = x === 50 && y === 50 ? 'handle center' : 'handle';
    handle.style.left = Math.round((object.offsetWidth - 1) * x / 100) - object.clientLeft + 'px';
    handle.style.top = Math.round((object.offsetHeight - 1) * y / 100) - object.clientTop + 'px';
    object.appendChild(handle);
  });
});

// LED clock
const clock = document.getElementById('clock');
const centerX = 111;
const centerY = 66;

function dot(x, y) {
  const led = document.createElementNS('http://www.w3.org/2000/svg', 'rect');
  led.setAttribute('x', Math.round(x));
  led.setAttribute('y', Math.round(y) - 1);
  led.setAttribute('width', 1);
  led.setAttribute('height', 2);
  led.setAttribute('fill', '#ffff55');
  clock.appendChild(led);
}

function segment(x1, y1, x2, y2, count) {
  for (let i = 0; i < count; i++) {
    const t = i / (count - 1);
    dot(x1 + (x2 - x1) * t, y1 + (y2 - y1) * t);
  }
}

for (let s = 0; s < 60; s++) {
  const angle = s * Math.PI / 30;
  if (s < 53) {
    dot(centerX + 54 * Math.sin(angle), centerY - 54 * Math.cos(angle));
  }
  if (s % 5 === 0) {
    dot(centerX + 57 * Math.sin(angle), centerY - 57 * Math.cos(angle));
  }
}

// 17:45
segment(84, 54, 83, 63, 4);
segment(83, 69, 82, 78, 4);
segment(93, 51, 105, 51, 5);
segment(106, 54, 105, 63, 4);
segment(104, 69, 103, 78, 4);
dot(112, 61);
dot(110, 74);
segment(118, 54, 117, 63, 4);
segment(118, 67, 130, 67, 5);
segment(132, 54, 131, 63, 4);
segment(130, 69, 129, 78, 4);
segment(141, 51, 153, 51, 5);
segment(140, 54, 139, 63, 4);
segment(140, 67, 151, 67, 5);
segment(152, 69, 151, 78, 4);
segment(137, 83, 149, 83, 5);

const query = document.getElementById('query');
query.focus();
query.select();
```
